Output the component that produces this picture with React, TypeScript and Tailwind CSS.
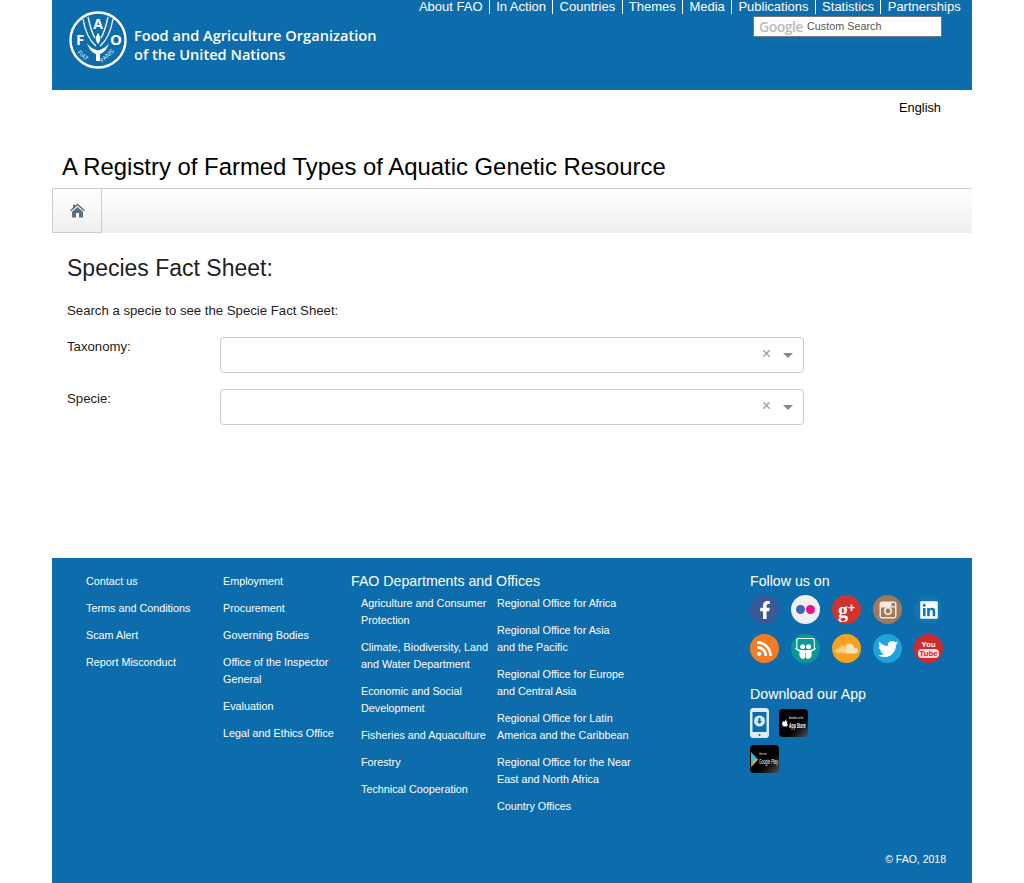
import { FaFacebookF, FaLinkedin, FaRss, FaSlideshare, FaSoundcloud, FaTwitter, FaApple } from "react-icons/fa";

const topNav = ["About FAO", "In Action", "Countries", "Themes", "Media", "Publications", "Statistics", "Partnerships"];
const footerOne = ["Contact us", "Terms and Conditions", "Scam Alert", "Report Misconduct"];
const footerTwo = ["Employment", "Procurement", "Governing Bodies", "Office of the Inspector General", "Evaluation", "Legal and Ethics Office"];
const departments = [
  "Agriculture and Consumer Protection",
  "Climate, Biodiversity, Land and Water Department",
  "Economic and Social Development",
  "Fisheries and Aquaculture",
  "Forestry",
  "Technical Cooperation",
];
const regional = [
  "Regional Office for Africa",
  "Regional Office for Asia\nand the Pacific",
  "Regional Office for Europe\nand Central Asia",
  "Regional Office for Latin\nAmerica and the Caribbean",
  "Regional Office for the Near\nEast and North Africa",
  "Country Offices",
];

function FaoLogo() {
  return (
    <svg width="58" height="58" viewBox="0 0 58 58" className="shrink-0">
      <circle cx="29" cy="29" r="27.5" fill="none" stroke="#fff" strokeWidth="2.4" />
      <g fill="none" stroke="#fff" strokeWidth="1.3">
        <path d="M14 8 C16 20 21 30 27 35" />
        <path d="M44 8 C42 20 37 30 31 35" />
        <path d="M19 6 C21 15 23 22 26 27" />
        <path d="M39 6 C37 15 35 22 32 27" />
      </g>
      <path d="M18 32 C20 39 24 42 27 43 L27 50 L31 50 L31 43 C34 42 38 39 40 32 C37 37 33 38 29 39.5 C25 38 21 37 18 32 Z" fill="#fff" />
      <path d="M29 22 C32 26 32 30 29 33 C26 30 26 26 29 22 Z" fill="#fff" />
      <text x="29" y="18" textAnchor="middle" fontFamily="Open Sans, sans-serif" fontWeight="700" fontSize="14" fill="#fff">A</text>
      <text x="11" y="34" textAnchor="middle" fontFamily="Open Sans, sans-serif" fontWeight="700" fontSize="15" fill="#fff">F</text>
      <text x="47" y="34" textAnchor="middle" fontFamily="Open Sans, sans-serif" fontWeight="700" fontSize="15" fill="#fff">O</text>
      <text x="8" y="42" fontFamily="Open Sans, sans-serif" fontSize="6" fill="#fff" transform="rotate(42 8 42)">FIAT</text>
      <text x="33" y="52" fontFamily="Open Sans, sans-serif" fontSize="6" fill="#fff" transform="rotate(-42 33 52)">PANIS</text>
    </svg>
  );
}

function HomeIcon() {
  return (
    <svg width="15" height="15" viewBox="0 0 15 15" fill="#5f6f81">
      <path d="M7.5 0.5 L15 7.2 L14 8.2 L7.5 2.6 L1 8.2 L0 7.2 L3 4.5 V1.5 H5 V2.8 Z" />
      <path d="M7.5 4 L13 8.8 V14.5 H9 V10 H6 V14.5 H2 V8.8 Z" />
    </svg>
  );
}

function Select() {
  return (
    <div className="flex h-9 w-[584px] items-center justify-end rounded border border-[#ccc] bg-white pr-[10px]">
      <span className="mb-[2px] mr-[12px] text-[16px] leading-none text-[#999]">×</span>
      <span className="h-0 w-0 border-x-[5px] border-t-[5px] border-x-transparent border-t-[#888]" />
    </div>
  );
}

function Links({ items, className }: { items: string[]; className: string }) {
  return (
    <ul className={`flex flex-col gap-[10px] whitespace-pre-line text-[10.8px] leading-[17px] text-white ${className}`}>
      {items.map((item) => (
        <li key={item}>{item}</li>
      ))}
    </ul>
  );
}

function Round({ bg, children }: { bg: string; children: React.ReactNode }) {
  return <div className={`flex h-[29px] w-[29px] items-center justify-center rounded-full text-white ${bg}`}>{children}</div>;
}

export default function App() {
  return (
    <div className="mx-[52px] h-[883px] w-[920px] overflow-hidden bg-white font-['Liberation_Sans',sans-serif] text-[#222]">
      <header className="flex h-[90px] justify-between bg-[#0d6cac]">
        <div className="flex items-start pl-[17px] pt-[11px]">
          <FaoLogo />
          <div className="ml-[7px] mt-[15px] whitespace-nowrap font-['Open_Sans',sans-serif] text-[14.6px] font-semibold leading-[19px] text-white">
            Food and Agriculture Organization
            <br />
            of the United Nations
          </div>
        </div>
        <div className="flex shrink-0 flex-col items-end pr-[5px]">
          <nav className="flex whitespace-nowrap text-[13px] leading-[14px] text-white">
            {topNav.map((item, i) => (
              <span key={item} className={`px-[6.3px] ${i > 0 ? "border-l border-white" : ""}`}>
                {item}
              </span>
            ))}
          </nav>
          <div className="mr-[25px] mt-[2px] flex h-[21px] w-[189px] items-center border border-[#777] bg-white pl-[5px] text-[10.8px] text-[#555]">
            <span className="mr-[4px] font-['Open_Sans',sans-serif] text-[14px] font-semibold leading-none tracking-[-0.5px] text-[#bbb]">Google</span>
            Custom Search
          </div>
        </div>
      </header>

      <div className="flex h-[36px] items-center justify-end pr-[31px] text-[12.8px] text-black">English</div>
      <h1 className="mt-[27px] h-[35px] pl-[10px] text-[23.9px] leading-[28px] text-black">A Registry of Farmed Types of Aquatic Genetic Resource</h1>

      <div className="flex h-[45px] border-t border-[#ccc] bg-gradient-to-b from-white to-[#efefef]">
        <div className="flex w-[50px] items-center justify-center border-x border-b border-[#ccc]">
          <HomeIcon />
        </div>
      </div>

      <main className="h-[325px] px-[15px] text-[13.2px] leading-[20px]">
        <h2 className="pt-[21px] text-[23px] leading-[28px]">Species Fact Sheet:</h2>
        <p className="mt-[19px]">Search a specie to see the Specie Fact Sheet:</p>
        <div className="mt-[16px] flex">
          <label className="w-[153px]">Taxonomy:</label>
          <Select />
        </div>
        <div className="mt-[16px] flex">
          <label className="w-[153px]">Specie:</label>
          <Select />
        </div>
      </main>

      <footer className="flex h-[325px] bg-[#0d6cac] pl-[34px] pt-[15px] text-white">
        <Links items={footerOne} className="w-[137px]" />
        <Links items={footerTwo} className="w-[128px] pr-[10px]" />
        <div className="w-[399px]">
          <h3 className="-mt-[2px] text-[14.2px] leading-[20px]">FAO Departments and Offices</h3>
          <div className="mt-[4px] flex pl-[10px]">
            <Links items={departments} className="w-[136px]" />
            <Links items={regional} className="w-[140px]" />
          </div>
        </div>
        <div className="flex w-[196px] flex-col">
          <h3 className="-mt-[2px] text-[14.2px] leading-[20px]">Follow us on</h3>
          <div className="mt-[4px] grid w-[193px] grid-cols-5 gap-x-3 gap-y-[10px]">
            <Round bg="bg-[#3b5998]"><FaFacebookF size={18} /></Round>
            <Round bg="bg-[#f0f0f0]">
              <span className="h-[9px] w-[9px] rounded-full bg-[#3f63b5]" />
              <span className="ml-[1px] h-[9px] w-[9px] rounded-full bg-[#ee0f8c]" />
            </Round>
            <Round bg="bg-[#d0342f]">
              <span className="font-['Liberation_Serif',serif] text-[20px] font-bold leading-[20px]">g</span>
              <span className="mb-[3px] text-[12px] font-bold leading-none">+</span>
            </Round>
            <Round bg="bg-[#a07a5c]">
              <svg width="18" height="18" viewBox="0 0 18 18">
                <rect x="0.5" y="0.5" width="17" height="17" rx="3" fill="#f3ebe2" />
                <rect x="2" y="6.5" width="14" height="9.5" fill="#a07a5c" />
                <circle cx="9" cy="10" r="4.2" fill="#f3ebe2" />
                <circle cx="9" cy="10" r="2.4" fill="#a07a5c" />
                <rect x="12.5" y="2" width="3.5" height="3.2" fill="#a07a5c" />
              </svg>
            </Round>
            <Round bg="bg-[#0e76b0]"><FaLinkedin size={20} /></Round>
            <Round bg="bg-[#f07c26]"><FaRss size={17} /></Round>
            <Round bg="bg-[#0a9a95]"><FaSlideshare size={21} /></Round>
            <Round bg="bg-[#f6a11f]"><FaSoundcloud size={23} className="text-[#fde3b8]" /></Round>
            <Round bg="bg-[#1fa3dc]"><FaTwitter size={20} /></Round>
            <Round bg="bg-[#cf2a2c]">
              <div className="flex flex-col items-center">
                <span className="text-[8px] font-bold leading-[9px]">You</span>
                <span className="rounded-sm bg-[#f4dada] px-[1px] text-[8px] font-bold leading-[9px] text-[#cf2a2c]">Tube</span>
              </div>
            </Round>
          </div>
          <h3 className="mt-[21px] text-[14.2px] leading-[20px]">Download our App</h3>
          <div className="mt-[4px] flex items-start">
            <svg width="19" height="30" viewBox="0 0 19 30">
              <rect x="0" y="0" width="19" height="30" rx="3.5" fill="#dcecf7" />
              <rect x="2.5" y="4" width="14" height="20" fill="#0d6cac" />
              <circle cx="9.5" cy="13" r="5.5" fill="#dcecf7" />
              <path d="M8.5 10 h2 v3 h1.6 l-2.6 3 -2.6 -3 h1.6 z" fill="#0d6cac" />
              <circle cx="9.5" cy="27" r="1" fill="#0d6cac" />
            </svg>
            <div className="ml-[10px] mt-px flex h-[28px] w-[29px] items-center overflow-hidden rounded-sm bg-gradient-to-br from-black via-black to-[#555] text-white">
              <FaApple size={8} className="ml-[2px] shrink-0" />
              <div className="origin-left scale-x-50 whitespace-nowrap">
                <div className="text-[4px] leading-[6px]">Available on the</div>
                <div className="text-[7px] font-bold leading-[10px]">App Store</div>
              </div>
            </div>
          </div>
          <div className="mt-[7px] flex h-[28px] w-[29px] items-center overflow-hidden rounded-sm bg-gradient-to-br from-black via-black to-[#555]">
            <svg width="8" height="15" viewBox="0 0 8 15" className="ml-[1px] shrink-0">
              <path d="M0 0 L7 7.5 L0 15 Z" fill="#45b6c8" />
              <path d="M7 7.5 L0 15 L3.5 7.5 Z" fill="#e6b23c" />
            </svg>
            <div className="origin-left scale-x-50 whitespace-nowrap text-white">
              <div className="text-[4px] leading-[6px]">Get it on</div>
              <div className="text-[7px] leading-[10px]">Google Play</div>
            </div>
          </div>
          <p className="mt-[78px] text-right text-[10.5px] leading-[17px]">© FAO, 2018</p>
        </div>
      </footer>
    </div>
  );
}
